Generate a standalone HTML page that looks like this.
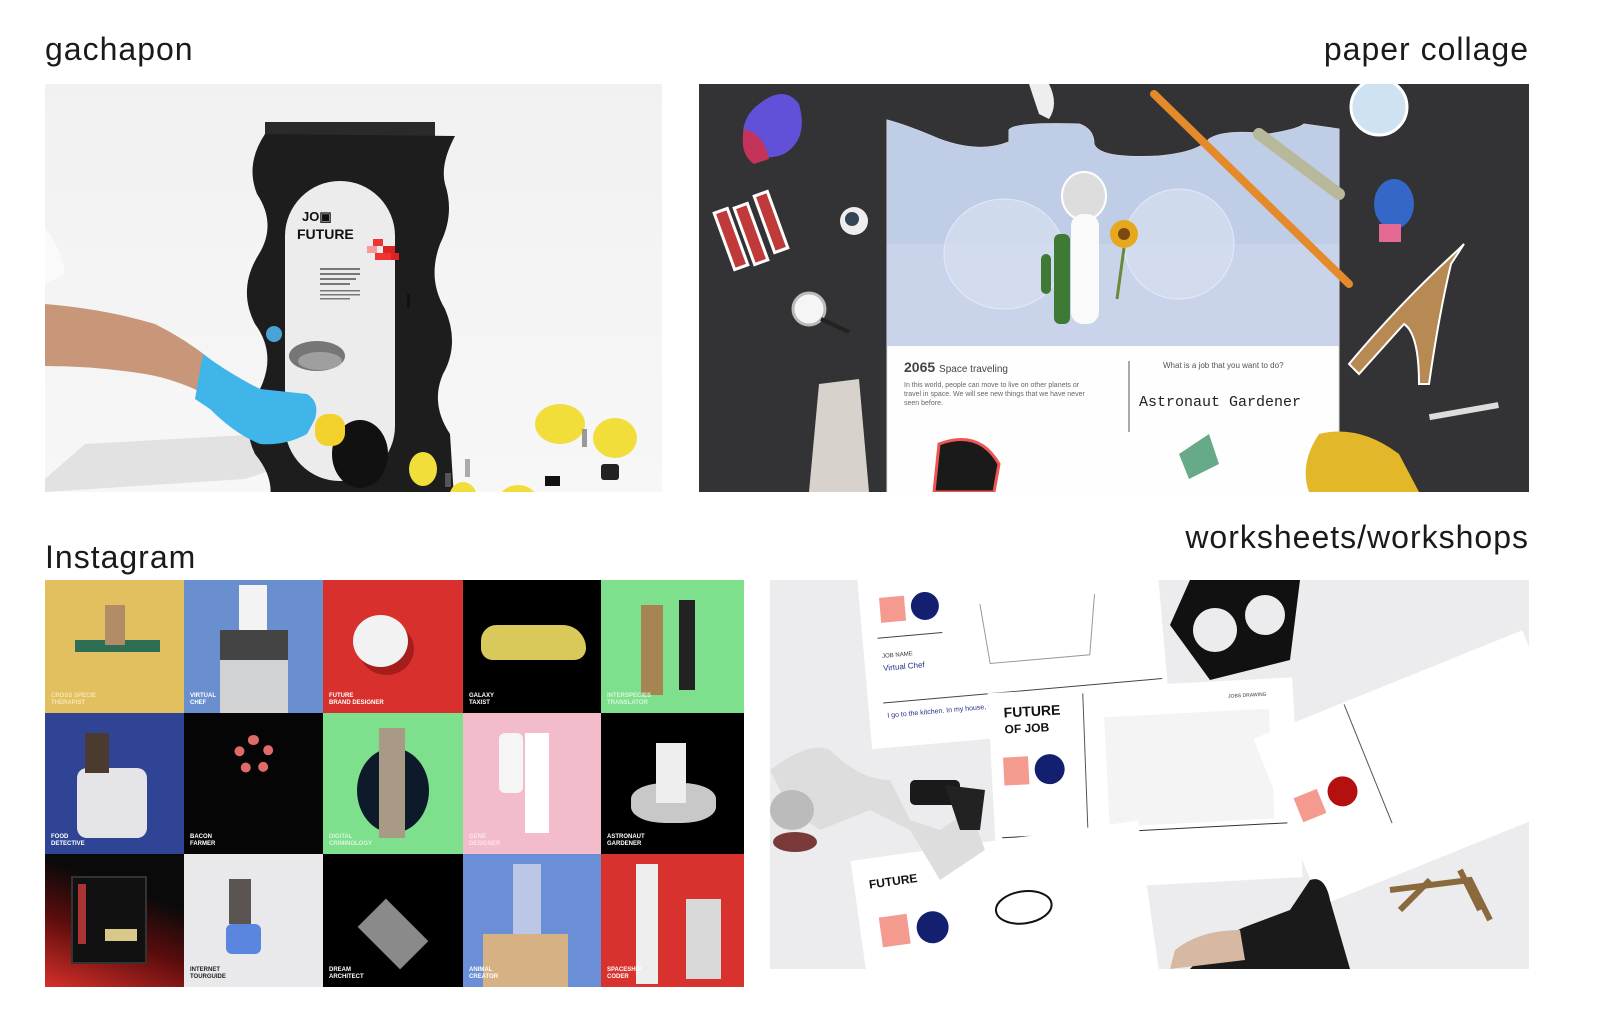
<!DOCTYPE html>
<html><head><meta charset="utf-8"><style>
*{margin:0;padding:0;box-sizing:border-box}
body{width:1608px;height:1018px;background:#fff;position:relative;overflow:hidden;font-family:"Liberation Sans",sans-serif;color:#111}
.t{position:absolute;font-size:32px;font-weight:normal;letter-spacing:1px;line-height:40px;color:#1a1a1a}
.box{position:absolute;overflow:hidden}
.tile{position:absolute;overflow:hidden}
.lab{position:absolute;left:6px;bottom:6px;color:#fff;font-size:6px;font-weight:bold;line-height:7px}
</style></head><body>
<div class="t" style="left:45px;top:29px">gachapon</div>
<div class="t" style="right:79px;top:29px">paper collage</div>
<div class="t" style="left:45px;top:537px">Instagram</div>
<div class="t" style="right:79px;top:517px">worksheets/workshops</div>

<!-- gachapon -->
<div class="box" style="left:45px;top:84px;width:617px;height:408px;background:#eeeeee">
<svg width="617" height="408" viewBox="0 0 617 408">
<defs><linearGradient id="fl" x1="0" y1="0" x2="0" y2="1"><stop offset="0" stop-color="#f1f1f1"/><stop offset="1" stop-color="#f7f7f7"/></linearGradient></defs>
<rect width="617" height="408" fill="url(#fl)"/>
<path d="M0 395 L40 360 L220 350 L260 375 L200 395 L0 408Z" fill="#d3d3d3" opacity=".6"/>
<rect x="220" y="38" width="170" height="14" fill="#2a2a2a"/>
<path d="M220 50 L410 52 Q395 80 400 100 Q410 130 395 160 Q382 195 400 225 Q415 260 398 290 Q385 320 405 350 L410 430 L220 430 Q235 400 210 370 Q195 340 215 305 Q232 270 210 240 Q192 205 214 170 Q232 140 212 110 Q200 80 220 50Z" fill="#1d1d1d"/>
<rect x="240" y="97" width="110" height="300" rx="55" fill="#ececec"/>
<text x="257" y="137" font-family="Liberation Sans" font-weight="bold" font-size="13" fill="#111">JO▣</text>
<text x="252" y="155" font-family="Liberation Sans" font-weight="bold" font-size="14" fill="#111">FUTURE</text>
<rect x="328" y="155" width="10" height="7" fill="#e33"/><rect x="338" y="162" width="12" height="7" fill="#d22"/><rect x="322" y="162" width="10" height="7" fill="#f39a9a"/><rect x="330" y="169" width="16" height="7" fill="#e33"/><rect x="346" y="169" width="8" height="7" fill="#d22"/>
<g fill="#777"><rect x="275" y="184" width="40" height="2"/><rect x="275" y="189" width="40" height="2"/><rect x="275" y="194" width="36" height="2"/><rect x="275" y="199" width="30" height="2"/><rect x="275" y="206" width="40" height="1.5"/><rect x="275" y="210" width="40" height="1.5"/><rect x="275" y="214" width="30" height="1.5"/></g>
<rect x="362" y="210" width="3" height="14" fill="#111"/>
<circle cx="229" cy="250" r="8" fill="#4aa3d8"/>
<ellipse cx="272" cy="272" rx="28" ry="15" fill="#444" opacity=".7"/>
<ellipse cx="275" cy="277" rx="22" ry="9" fill="#bbb" opacity=".6"/>
<ellipse cx="315" cy="370" rx="28" ry="34" fill="#111"/>
<path d="M0 220 Q60 225 110 240 Q140 255 165 275 L160 310 Q130 295 100 290 Q50 282 0 282Z" fill="#c89678"/>
<path d="M0 145 Q15 160 20 190 L0 200Z" fill="#fafafa"/>
<path d="M158 270 Q185 290 215 305 L262 310 Q275 318 270 335 L262 350 Q240 362 215 360 Q190 350 165 325 L150 315Z" fill="#3fb5ea"/>
<rect x="270" y="330" width="30" height="32" rx="13" fill="#f2d12d"/>
<ellipse cx="473" cy="418" rx="20" ry="17" fill="#f2de3a"/><ellipse cx="378" cy="385" rx="14" ry="17" fill="#f2de3a"/><ellipse cx="418" cy="414" rx="14" ry="16" fill="#f2de3a"/><ellipse cx="570" cy="354" rx="22" ry="20" fill="#f2de3a"/><ellipse cx="515" cy="340" rx="25" ry="20" fill="#f2de3a"/>
<rect x="400" y="389" width="6" height="14" fill="#555"/><rect x="420" y="375" width="5" height="18" fill="#aaa"/><rect x="537" y="345" width="5" height="18" fill="#999"/><rect x="556" y="380" width="18" height="16" rx="3" fill="#222"/><rect x="500" y="392" width="15" height="10" fill="#111"/>
</svg></div>

<!-- paper collage -->
<div class="box" style="left:699px;top:84px;width:830px;height:408px;background:#333335">
<svg width="830" height="408" viewBox="0 0 830 408">
<path d="M188 36 Q210 42 240 55 Q280 70 310 58 L310 46 Q315 38 380 40 Q395 45 395 60 Q400 75 460 72 Q500 68 510 55 Q525 45 570 50 Q600 45 605 40 L640 45 L640 420 L188 420Z" fill="#fefefe" stroke="#ddd"/>
<path d="M188 36 Q210 42 240 55 Q280 70 310 58 L310 46 Q315 38 380 40 Q395 45 395 60 Q400 75 460 72 Q500 68 510 55 Q525 45 570 50 Q600 45 605 40 L640 45 L640 262 L188 262Z" fill="#bfcde6"/>
<rect x="188" y="160" width="452" height="102" fill="#c9d4ea"/>
<ellipse cx="305" cy="170" rx="60" ry="55" fill="#d5deef" stroke="#eef" opacity=".8"/><ellipse cx="480" cy="160" rx="55" ry="55" fill="#d5deef" stroke="#eef" opacity=".8"/>
<ellipse cx="385" cy="112" rx="22" ry="24" fill="#ddd" stroke="#fff" stroke-width="2"/><rect x="372" y="130" width="28" height="110" rx="12" fill="#fafafa"/>
<rect x="355" y="150" width="16" height="90" rx="6" fill="#3e7a35"/><rect x="342" y="170" width="10" height="40" rx="5" fill="#3e7a35"/>
<circle cx="425" cy="150" r="14" fill="#e7a81e"/><circle cx="425" cy="150" r="6" fill="#7a4a10"/><path d="M425 164 L418 215" stroke="#6a8a3a" stroke-width="3"/>
<text x="205" y="288" font-family="Liberation Sans" font-weight="bold" font-size="14" fill="#444">2065 <tspan font-weight="normal" font-size="10">Space traveling</tspan></text>
<text x="205" y="303" font-family="Liberation Sans" font-size="7" fill="#666">In this world, people can move to live on other planets or</text>
<text x="205" y="312" font-family="Liberation Sans" font-size="7" fill="#666">travel in space. We will see new things that we have never</text>
<text x="205" y="321" font-family="Liberation Sans" font-size="7" fill="#666">seen before.</text>
<line x1="430" y1="277" x2="430" y2="348" stroke="#555"/>
<text x="464" y="284" font-family="Liberation Sans" font-size="8" fill="#555">What is a job that you want to do?</text>
<text x="440" y="322" font-family="Liberation Mono" font-size="15" fill="#222">Astronaut Gardener</text>
<path d="M455 10 L650 200" stroke="#e58a2a" stroke-width="8" stroke-linecap="round"/>
<path d="M60 20 Q85 0 100 20 Q110 55 85 70 Q60 80 45 60 Q40 35 60 20Z" fill="#6150d8"/><path d="M45 45 Q65 50 70 75 L55 80 Q40 70 45 45Z" fill="#c4335a"/>
<g fill="#c03a3a" stroke="#fff" stroke-width="3"><rect x="25" y="125" width="14" height="60" transform="rotate(-20 32 155)"/><rect x="45" y="120" width="14" height="60" transform="rotate(-20 52 150)"/><rect x="65" y="108" width="14" height="60" transform="rotate(-20 72 138)"/></g>
<circle cx="155" cy="137" r="14" fill="#eee"/><circle cx="153" cy="135" r="7" fill="#345"/>
<circle cx="110" cy="225" r="16" fill="#f5f5f5" stroke="#bbb" stroke-width="3"/><line x1="122" y1="235" x2="150" y2="248" stroke="#222" stroke-width="4"/>
<path d="M120 300 L160 295 L170 408 L110 408Z" fill="#d8d2cc"/>
<circle cx="680" cy="23" r="28" fill="#cfe2f2" stroke="#fff" stroke-width="3"/>
<path d="M560 50 L640 110" stroke="#b8b89a" stroke-width="12" stroke-linecap="round"/>
<ellipse cx="695" cy="120" rx="20" ry="25" fill="#3567c8"/><rect x="680" y="140" width="22" height="18" fill="#e46a93"/>
<path d="M650 280 Q700 220 760 165 L765 160 L752 180 Q740 230 730 300 L720 300 Q720 250 705 240 L660 290Z" fill="#b78a53" stroke="#fff" stroke-width="2"/>
<rect x="730" y="325" width="70" height="6" fill="#ddd" transform="rotate(-10 760 328)"/>
<path d="M620 350 Q660 340 700 370 L720 408 L610 408 Q600 380 620 350Z" fill="#e2b72a"/>
<path d="M240 360 Q280 345 300 380 L295 408 L235 408Z" fill="#1a1a1a" stroke="#e55" stroke-width="3"/>
<path d="M480 370 L510 350 L520 380 L490 395Z" fill="#6a8"/>
<path d="M330 0 L350 0 Q360 20 350 35 L340 30Z" fill="#eee"/>
</svg></div>

<!-- instagram -->
<div class="box" style="left:45px;top:580px;width:699px;height:407px">
<div class="tile" style="left:0;top:0;width:139px;height:133px;background:#e2c05f"><div style="position:absolute;left:30px;top:60px;width:85px;height:12px;background:#2d6e55"></div><div style="position:absolute;left:60px;top:25px;width:20px;height:40px;background:#b28b67"></div><div class="lab" style="color:#f5e6b0">CROSS SPECIE<br>THERAPIST</div></div>
<div class="tile" style="left:139px;top:0;width:139px;height:133px;background:#6a8fcf"><div style="position:absolute;left:36px;top:50px;width:68px;height:30px;background:#444"></div><div style="position:absolute;left:36px;top:80px;width:68px;height:53px;background:#d0d2d4"></div><div style="position:absolute;left:55px;top:5px;width:28px;height:45px;background:#f3f3f3"></div><div class="lab">VIRTUAL<br>CHEF</div></div>
<div class="tile" style="left:278px;top:0;width:140px;height:133px;background:#d8302c"><div style="position:absolute;left:30px;top:35px;width:55px;height:52px;border-radius:50%;background:#f2f2f2;box-shadow:6px 8px 0 #a51e1c"></div><div class="lab">FUTURE<br>BRAND DESIGNER</div></div>
<div class="tile" style="left:418px;top:0;width:138px;height:133px;background:#000"><div style="position:absolute;left:18px;top:45px;width:105px;height:35px;border-radius:20px 30px 15px 15px;background:#d8c95a"></div><div class="lab">GALAXY<br>TAXIST</div></div>
<div class="tile" style="left:556px;top:0;width:143px;height:133px;background:#7ee08c"><div style="position:absolute;left:40px;top:25px;width:22px;height:90px;background:#a68552"></div><div style="position:absolute;left:78px;top:20px;width:16px;height:90px;background:#222"></div><div class="lab" style="color:#d6f6dc">INTERSPECIES<br>TRANSLATOR</div></div>

<div class="tile" style="left:0;top:133px;width:139px;height:141px;background:#2f4494"><div style="position:absolute;left:32px;top:55px;width:70px;height:70px;border-radius:10px;background:#e5e5e8"></div><div style="position:absolute;left:40px;top:20px;width:24px;height:40px;background:#4a3a30"></div><div class="lab">FOOD<br>DETECTIVE</div></div>
<div class="tile" style="left:139px;top:133px;width:139px;height:141px;background:#050505"><div style="position:absolute;left:50px;top:22px;width:40px;height:40px;border-radius:50%;border:10px dotted #e06a6a"></div><div class="lab">BACON<br>FARMER</div></div>
<div class="tile" style="left:278px;top:133px;width:140px;height:141px;background:#7ee08c"><div style="position:absolute;left:34px;top:35px;width:72px;height:85px;border-radius:50%;background:#0d1a2a"></div><div style="position:absolute;left:56px;top:15px;width:26px;height:110px;background:#a89a85"></div><div class="lab" style="color:#d6f6dc">DIGITAL<br>CRIMINOLOGY</div></div>
<div class="tile" style="left:418px;top:133px;width:138px;height:141px;background:#f3bccb"><div style="position:absolute;left:36px;top:20px;width:24px;height:60px;border-radius:6px;background:#f5f5f5"></div><div style="position:absolute;left:62px;top:20px;width:24px;height:100px;background:#fff"></div><div class="lab" style="color:#fbe3ea">GENE<br>DESIGNER</div></div>
<div class="tile" style="left:556px;top:133px;width:143px;height:141px;background:#000"><div style="position:absolute;left:30px;top:70px;width:85px;height:40px;border-radius:40%;background:#c8c8c8"></div><div style="position:absolute;left:55px;top:30px;width:30px;height:60px;background:#eee"></div><div class="lab">ASTRONAUT<br>GARDENER</div></div>

<div class="tile" style="left:0;top:274px;width:139px;height:133px;background:linear-gradient(20deg,#d6302a 0%,#5a0c0c 40%,#0a0a0a 70%)"><div style="position:absolute;left:26px;top:22px;width:76px;height:88px;border:2px solid #333;background:#111"></div><div style="position:absolute;left:60px;top:75px;width:32px;height:12px;background:#d8c88a"></div><div style="position:absolute;left:33px;top:30px;width:8px;height:60px;background:#a33"></div></div>
<div class="tile" style="left:139px;top:274px;width:139px;height:133px;background:#e9e9ec"><div style="position:absolute;left:42px;top:70px;width:35px;height:30px;border-radius:6px;background:#5a86e0"></div><div style="position:absolute;left:45px;top:25px;width:22px;height:45px;background:#5b5552"></div><div class="lab" style="color:#222">INTERNET<br>TOURGUIDE</div></div>
<div class="tile" style="left:278px;top:274px;width:140px;height:133px;background:#000"><div style="position:absolute;left:40px;top:60px;width:60px;height:40px;transform:rotate(45deg);background:#8a8a8a"></div><div class="lab">DREAM<br>ARCHITECT</div></div>
<div class="tile" style="left:418px;top:274px;width:138px;height:133px;background:#6a8fd6"><div style="position:absolute;left:20px;top:80px;width:85px;height:53px;background:#d6b184"></div><div style="position:absolute;left:50px;top:10px;width:28px;height:70px;background:#bcc7e8"></div><div class="lab">ANIMAL<br>CREATOR</div></div>
<div class="tile" style="left:556px;top:274px;width:143px;height:133px;background:#d8322e"><div style="position:absolute;left:35px;top:10px;width:22px;height:120px;background:#eee"></div><div style="position:absolute;left:85px;top:45px;width:35px;height:80px;background:#d9d9d9"></div><div class="lab">SPACESHIP<br>CODER</div></div>
</div>

<!-- worksheets -->
<div class="box" style="left:770px;top:580px;width:759px;height:389px;background:#e8e8ea">
<svg width="759" height="389" viewBox="0 0 759 389">
<rect width="759" height="389" fill="#ececee"/>
<g transform="rotate(-5 260 80)"><rect x="95" y="-20" width="300" height="175" fill="#fff"/><rect x="115" y="5" width="25" height="25" fill="#f49a8f"/><circle cx="160" cy="17" r="14" fill="#132070"/><line x1="110" y1="45" x2="175" y2="45" stroke="#444"/><text x="113" y="65" font-size="6" font-family="Liberation Sans" fill="#333">JOB NAME</text><text x="113" y="78" font-size="8" font-family="Liberation Sans" fill="#24308a">Virtual Chef</text><line x1="110" y1="110" x2="390" y2="110" stroke="#444"/><text x="113" y="125" font-size="7" font-family="Liberation Sans" fill="#24308a">I go to the kitchen. In my house, with different...</text><path d="M215 20 L220 80 L320 80 L330 20" stroke="#999" fill="none"/></g>
<g transform="rotate(-3 380 250)"><rect x="225" y="105" width="305" height="200" fill="#fff"/><text x="240" y="130" font-size="14" font-weight="bold" font-family="Liberation Sans" fill="#111">FUTURE</text><text x="240" y="146" font-size="12" font-weight="bold" font-family="Liberation Sans" fill="#111">OF JOB</text><rect x="237" y="170" width="25" height="28" fill="#f49a8f"/><circle cx="283" cy="184" r="15" fill="#132070"/><line x1="320" y1="110" x2="318" y2="245" stroke="#555"/><line x1="232" y1="250" x2="522" y2="250" stroke="#333"/><rect x="340" y="135" width="165" height="110" fill="#f4f4f4"/><text x="465" y="122" font-size="5" font-family="Liberation Sans" fill="#333">JOBS DRAWING</text></g>
<g transform="rotate(-22 620 190)"><rect x="505" y="110" width="290" height="180" fill="#fff"/><rect x="520" y="180" width="25" height="26" fill="#f49a8f"/><circle cx="568" cy="192" r="15" fill="#b51010"/><line x1="602" y1="112" x2="602" y2="240" stroke="#555"/></g>
<path d="M420 0 L530 0 L520 80 L440 100 L400 45Z" fill="#111"/><circle cx="445" cy="50" r="22" fill="#ececee"/><circle cx="495" cy="35" r="20" fill="#ececee"/>
<g transform="rotate(-8 200 340)"><rect x="90" y="265" width="290" height="160" fill="#fff"/><text x="105" y="295" font-size="12" font-weight="bold" font-family="Liberation Sans" fill="#111">FUTURE</text><rect x="110" y="325" width="28" height="30" fill="#f49a8f"/><circle cx="162" cy="342" r="16" fill="#132070"/><ellipse cx="255" cy="335" rx="28" ry="16" fill="none" stroke="#111" stroke-width="2"/></g>
<path d="M0 190 Q40 160 60 170 Q90 200 120 200 L140 240 L170 250 L200 230 L215 270 L170 300 L140 250 L100 230 L50 250 L20 230Z" fill="#ddd"/>
<ellipse cx="22" cy="230" rx="22" ry="20" fill="#bbb"/><ellipse cx="25" cy="262" rx="22" ry="10" fill="#7a3a3a"/>
<rect x="140" y="200" width="50" height="25" rx="5" fill="#1a1a1a"/><path d="M175 205 L215 210 L210 250 L190 250Z" fill="#222"/>
<path d="M420 389 Q450 355 480 345 L520 330 L540 300 Q555 295 560 320 L580 389Z" fill="#1a1a1a"/><path d="M405 370 Q430 350 470 350 L475 380 L400 389Z" fill="#d6b8a3"/>
<g stroke="#8a6a3d" stroke-width="6" fill="none"><path d="M620 310 L700 300 L720 340"/><path d="M630 330 L660 300"/><path d="M690 290 L710 330"/></g>
</svg></div>
</body></html>
